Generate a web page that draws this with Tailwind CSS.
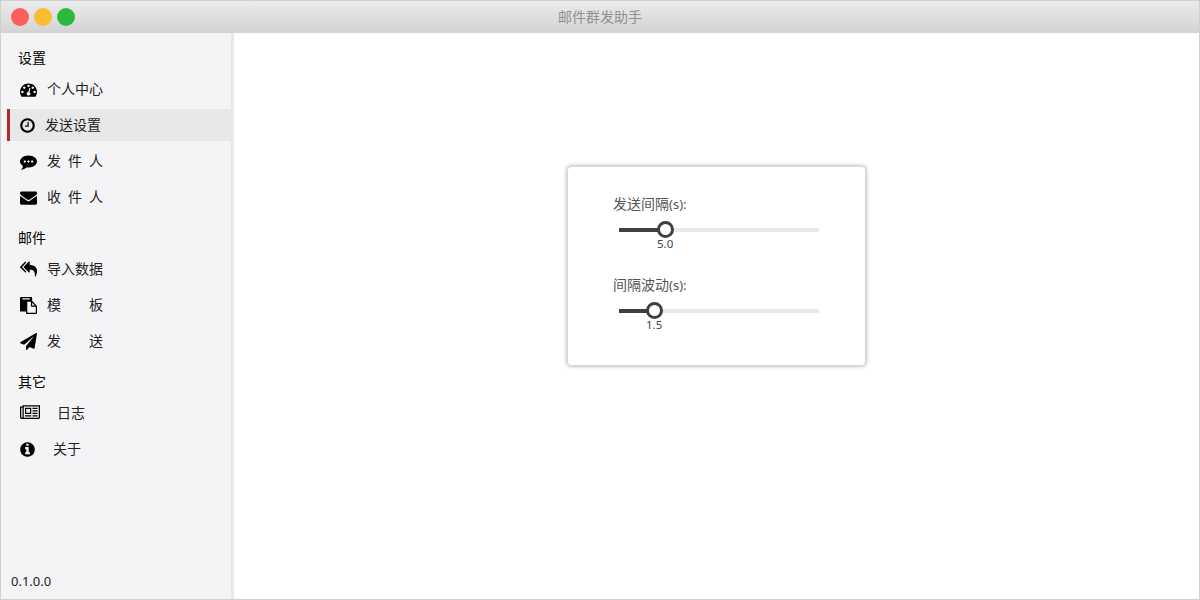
<!DOCTYPE html>
<html>

<head>
	<meta charset="UTF-8" />
	<script src="https://cdn.jsdelivr.net/npm/@tailwindcss/browser@4"></script>
	<title>邮件群发助手</title>
</head>

<body class="overflow-hidden">
	<div class="flex flex-col w-[1200px] h-[600px] border border-[#d0d0d0] bg-white text-[14px] font-['Noto_Sans','Noto_Sans_CJK_SC',sans-serif]">
		<!-- title bar -->
		<div class="relative flex items-center justify-center h-[32px] shrink-0 bg-gradient-to-b from-[#ebebeb] to-[#d3d3d3]">
			<div class="absolute left-[10px] top-[7px] flex gap-[5px]">
				<div class="w-[18px] h-[18px] rounded-full bg-[#fc5f5c]"></div>
				<div class="w-[18px] h-[18px] rounded-full bg-[#fdbb2f]"></div>
				<div class="w-[18px] h-[18px] rounded-full bg-[#2ab93b]"></div>
			</div>
			<span class="text-[#909090] leading-none">邮件群发助手</span>
		</div>

		<div class="flex flex-1 min-h-0">
			<!-- sidebar -->
			<div class="flex flex-col w-[233px] shrink-0 pt-[12px] bg-[#f4f4f7] border-r-[3px] border-[#e8e8e8] text-[#222222]">
				<div class="flex items-center h-[26px] pb-[2px] pl-[17px] text-black">设置</div>
				<div class="flex items-center h-[36px] ml-[6px] pl-[13px]">
					<div class="w-[18px] flex"><svg class="w-[17px] h-[17px]" viewBox="0 0 1792 1792" fill="#000"><path d="M384 1152q0-53-37.5-90.5t-90.5-37.5-90.5 37.5-37.5 90.5 37.5 90.5 90.5 37.5 90.5-37.5 37.5-90.5zm192-448q0-53-37.5-90.5t-90.5-37.5-90.5 37.5-37.5 90.5 37.5 90.5 90.5 37.5 90.5-37.5 37.5-90.5zm428 481l101-382q6-26-7.5-48.5t-38.5-29.5-48 6.5-30 39.5l-101 382q-60 5-107 43.5t-63 98.5q-20 77 20 146t117 89 146-20 89-117q16-60-6-117t-72-91zm660-33q0-53-37.5-90.5t-90.5-37.5-90.5 37.5-37.5 90.5 37.5 90.5 90.5 37.5 90.5-37.5 37.5-90.5zm-640-640q0-53-37.5-90.5t-90.5-37.5-90.5 37.5-37.5 90.5 37.5 90.5 90.5 37.5 90.5-37.5 37.5-90.5zm448 192q0-53-37.5-90.5t-90.5-37.5-90.5 37.5-37.5 90.5 37.5 90.5 90.5 37.5 90.5-37.5 37.5-90.5zm320 448q0 261-141 483-19 29-54 29h-1402q-35 0-54-29-141-221-141-483 0-182 71-348t191-286 286-191 348-71 348 71 286 191 191 286 71 348z"/></svg></div>
					<div class="ml-[9px] -mt-[2px] w-[56px] flex justify-between"><span>个人中心</span></div>
				</div>
				<div class="flex items-center h-[32px] my-[2px] ml-[6px] pl-[10px] bg-[#e8e8e8] border-l-[3px] border-[#b22a2a]">
					<div class="w-[18px] flex"><svg class="w-[15px] h-[17px]" viewBox="128 0 1536 1792" fill="#000"><path d="M1024 544v448q0 14-9 23t-23 9h-320q-14 0-23-9t-9-23v-64q0-14 9-23t23-9h224v-352q0-14 9-23t23-9h64q14 0 23 9t9 23zm416 352q0-148-73-273t-198-198-273-73-273 73-198 198-73 273 73 273 198 198 273 73 273-73 198-198 73-273zm224 0q0 209-103 385.5t-279.5 279.5-385.5 103-385.5-103-279.5-279.5-103-385.5 103-385.5 279.5-279.5 385.5-103 385.5 103 279.5 279.5 103 385.5z"/></svg></div>
					<div class="ml-[7px] -mt-[2px] w-[56px] flex justify-between"><span>发送设置</span></div>
				</div>
				<div class="flex items-center h-[36px] ml-[6px] pl-[13px]">
					<div class="w-[18px] flex"><svg class="w-[17px] h-[17px]" viewBox="0 0 1792 1792" fill="#000"><path d="M640 896q0-53-37.5-90.5t-90.5-37.5-90.5 37.5-37.5 90.5 37.5 90.5 90.5 37.5 90.5-37.5 37.5-90.5zm384 0q0-53-37.5-90.5t-90.5-37.5-90.5 37.5-37.5 90.5 37.5 90.5 90.5 37.5 90.5-37.5 37.5-90.5zm384 0q0-53-37.5-90.5t-90.5-37.5-90.5 37.5-37.5 90.5 37.5 90.5 90.5 37.5 90.5-37.5 37.5-90.5zm384 0q0 174-120 321.5t-326 233-450 85.5q-110 0-211-18-173 173-435 229-52 10-86 13-12 1-22-6t-13-18q-4-15 20-37 5-5 23.5-21.5t25.5-23.5 23.5-25.5 24-31.5 20.5-37 20-48 14.5-57.5 12.5-72.5q-146-90-229.5-216.5t-83.5-269.5q0-174 120-321.5t326-233 450-85.5 450 85.5 326 233 120 321.5z"/></svg></div>
					<div class="ml-[9px] -mt-[2px] w-[56px] flex justify-between"><span>发</span><span>件</span><span>人</span></div>
				</div>
				<div class="flex items-center h-[36px] ml-[6px] pl-[13px]">
					<div class="w-[18px] flex"><svg class="w-[17px] h-[17px]" viewBox="0 0 1792 1792" fill="#000"><path d="M1792 710v794q0 66-47 113t-113 47h-1472q-66 0-113-47t-47-113v-794q44 49 101 87 362 246 497 345 57 42 92.5 65.5t94.5 48 110 24.5h2q51 0 110-24.5t94.5-48 92.5-65.5q170-123 498-345 57-39 100-87zm0-294q0 79-49 151t-122 123q-376 261-468 325-10 7-42.5 30.5t-54 38-52 32.5-57.5 27-50 9h-2q-23 0-50-9t-57.5-27-52-32.5-54-38-42.5-30.5q-91-64-262-182.5t-205-142.5q-62-42-117-115.5t-55-136.5q0-78 41.5-130t118.5-52h1472q65 0 112.5 47t47.5 113z"/></svg></div>
					<div class="ml-[9px] -mt-[2px] w-[56px] flex justify-between"><span>收</span><span>件</span><span>人</span></div>
				</div>

				<div class="flex items-center h-[26px] pb-[2px] mt-[10px] pl-[17px] text-black">邮件</div>
				<div class="flex items-center h-[36px] ml-[6px] pl-[13px]">
					<div class="w-[18px] flex"><svg class="w-[17px] h-[17px]" viewBox="0 0 1792 1792" fill="#000"><path d="M640 1082v70q0 42-39 59-13 5-25 5-27 0-45-19l-512-512q-19-19-19-45t19-45l512-512q29-31 70-14 39 17 39 59v69l-397 398q-19 19-19 45t19 45zm1152 38q0 58-17 133.5t-38.5 138-48 125-40.5 90.5l-20 40q-8 17-28 17-6 0-9-1-25-8-23-34 43-400-106-565-64-71-170.5-110.5t-267.5-52.5v251q0 42-39 59-13 5-25 5-27 0-45-19l-512-512q-19-19-19-45t19-45l512-512q29-31 70-14 39 17 39 59v262q411 28 599 221 169 173 169 509z"/></svg></div>
					<div class="ml-[9px] -mt-[2px] w-[56px] flex justify-between"><span>导入数据</span></div>
				</div>
				<div class="flex items-center h-[36px] ml-[6px] pl-[13px]">
					<div class="w-[18px] flex"><svg class="w-[17px] h-[17px]" viewBox="0 0 1792 1792" fill="#000"><path d="M768 1664h896v-640h-416q-40 0-68-28t-28-68v-416h-384v1152zm256-1440v-64q0-13-9.5-22.5t-22.5-9.5h-704q-13 0-22.5 9.5t-9.5 22.5v64q0 13 9.5 22.5t22.5 9.5h704q13 0 22.5-9.5t9.5-22.5zm256 672h299l-299-299v299zm512 128v672q0 40-28 68t-68 28h-960q-40 0-68-28t-28-68v-160h-544q-40 0-68-28t-28-68v-1344q0-40 28-68t68-28h1088q40 0 68 28t28 68v328q21 13 36 28l408 408q28 28 48 76t20 88z"/></svg></div>
					<div class="ml-[9px] -mt-[2px] w-[56px] flex justify-between"><span>模</span><span>板</span></div>
				</div>
				<div class="flex items-center h-[36px] ml-[6px] pl-[13px]">
					<div class="w-[18px] flex"><svg class="w-[17px] h-[17px]" viewBox="0 0 1792 1792" fill="#000"><path d="M1764 11q33 24 27 64l-256 1536q-5 29-32 45-14 8-31 8-11 0-24-5l-453-185-242 295q-18 23-49 23-13 0-22-4-19-7-30.5-23.5t-11.5-36.5v-349l864-1059-1069 925-395-162q-37-14-40-55-2-40 32-59l1664-960q15-9 32-9 20 0 36 11z"/></svg></div>
					<div class="ml-[9px] -mt-[2px] w-[56px] flex justify-between"><span>发</span><span>送</span></div>
				</div>

				<div class="flex items-center h-[26px] pb-[2px] mt-[10px] pl-[17px] text-black">其它</div>
				<div class="flex items-center h-[36px] ml-[6px] pl-[13px]">
					<div class="w-[20px] flex"><svg class="w-[20px] h-[17.5px]" viewBox="0 0 2048 1792" fill="#000"><path d="M1024 512h-384v384h384v-384zm128 640v128h-640v-128h640zm0-768v640h-640v-640h640zm640 768v128h-512v-128h512zm0-256v128h-512v-128h512zm0-256v128h-512v-128h512zm0-256v128h-512v-128h512zm-1536 960v-960h-128v960q0 26 19 45t45 19 45-19 19-45zm1664 0v-1088h-1536v1088q0 33-11 64h1483q26 0 45-19t19-45zm128-1216v1216q0 80-56 136t-136 56h-1664q-80 0-136-56t-56-136v-1088h256v-128h1792z"/></svg></div>
					<div class="ml-[17px] -mt-[2px]">日志</div>
				</div>
				<div class="flex items-center h-[36px] ml-[6px] pl-[13px]">
					<div class="w-[18px] flex"><svg class="w-[15px] h-[17px]" viewBox="128 0 1536 1792" fill="#000"><path d="M1152 1376v-160q0-14-9-23t-23-9h-96v-512q0-14-9-23t-23-9h-320q-14 0-23 9t-9 23v160q0 14 9 23t23 9h96v320h-96q-14 0-23 9t-9 23v160q0 14 9 23t23 9h448q14 0 23-9t9-23zm-128-896v-160q0-14-9-23t-23-9h-192q-14 0-23 9t-9 23v160q0 14 9 23t23 9h192q14 0 23-9t9-23zm640 416q0 209-103 385.5t-279.5 279.5-385.5 103-385.5-103-279.5-279.5-103-385.5 103-385.5 279.5-279.5 385.5-103 385.5 103 279.5 279.5 103 385.5z"/></svg></div>
					<div class="ml-[15px] -mt-[2px]">关于</div>
				</div>

				<div class="mt-auto mb-[7px] pl-[10px] text-[13px] leading-[21px]">0.1.0.0</div>
			</div>

			<!-- main -->
			<div class="flex flex-1 justify-center items-start pt-[133px]">
				<div class="w-[299px] h-[200px] pt-[27px] pl-[45px] bg-white rounded-[4px] border border-[#d8d8d8] shadow-[0_0_4px_rgba(0,0,0,0.35)] text-[#555555]">
					<div class="h-[20px] leading-[20px]">发送间隔<span class="text-[13px]">(s):</span></div>
					<div class="relative flex items-center w-[200px] h-[17px] ml-[6px] mt-[7px]">
						<div class="w-[47px] h-[4px] bg-[#3f3f3f]"></div>
						<div class="w-[17px] h-[17px] -ml-[9px] z-10 rounded-full bg-white border-[3px] border-[#3f3f3f]"></div>
						<div class="flex-1 -ml-[8px] h-[4px] bg-[#e9e9e9]"></div>
						<span class="absolute left-[38px] top-[16px] text-[11.5px] leading-[14px] text-[#444444]">5.0</span>
					</div>
					<div class="h-[20px] leading-[20px] mt-[37px]">间隔波动<span class="text-[13px]">(s):</span></div>
					<div class="relative flex items-center w-[200px] h-[17px] ml-[6px] mt-[7px]">
						<div class="w-[36px] h-[4px] bg-[#3f3f3f]"></div>
						<div class="w-[17px] h-[17px] -ml-[9px] z-10 rounded-full bg-white border-[3px] border-[#3f3f3f]"></div>
						<div class="flex-1 -ml-[8px] h-[4px] bg-[#e9e9e9]"></div>
						<span class="absolute left-[27px] top-[16px] text-[11.5px] leading-[14px] text-[#444444]">1.5</span>
					</div>
				</div>
			</div>
		</div>
	</div>
</body>

</html>
